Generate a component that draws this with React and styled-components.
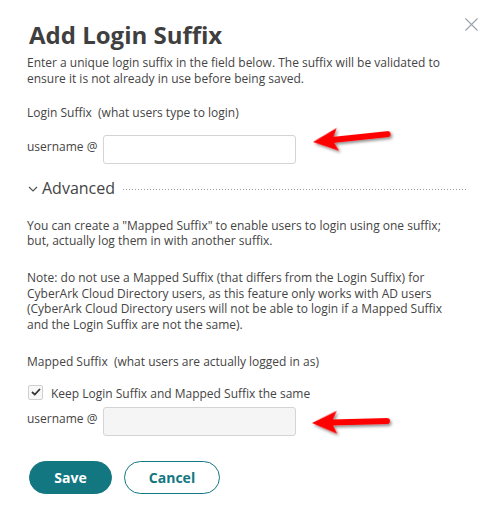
import React from "react";
import styled, { createGlobalStyle } from "styled-components";

const GlobalStyle = createGlobalStyle`
  body {
    margin: 0;
    background: #fff;
    font-family: "Open Sans", "Liberation Sans", sans-serif;
    color: #444;
  }
`;

const Dialog = styled.div`
  position: relative;
  width: 492px;
  height: 513px;
  box-sizing: border-box;
  padding: 0 25px 0 27px;
`;

const Header = styled.div`
  display: flex;
  justify-content: space-between;
  align-items: flex-start;
  margin-top: 19px;
`;

const Title = styled.h1`
  margin: 0 0 0 2px;
  font-size: 24px;
  line-height: 31px;
  font-weight: 700;
  color: #3f3f3f;
`;

const CloseButton = styled.button`
  border: 0;
  background: none;
  padding: 0;
  margin: -1px -12px 0 0;
  width: 14px;
  height: 14px;
  cursor: pointer;
  display: flex;
  svg {
    display: block;
  }
`;

const Text = styled.p`
  margin: ${(p) => p.$top || 0}px 0 0;
  max-width: 420px;
  font-size: 12px;
  line-height: 15.6px;
  color: #444;
`;

const FieldRow = styled.div`
  position: relative;
  display: flex;
  align-items: center;
  gap: 6px;
  margin-top: ${(p) => p.$top}px;
`;

const FieldLabel = styled.span`
  font-size: 12px;
  line-height: 15.6px;
  padding-bottom: 4px;
  white-space: nowrap;
`;

const Input = styled.input`
  box-sizing: border-box;
  width: 193px;
  height: 29px;
  border: 1px solid #d4d4d4;
  border-radius: 3px;
  background: ${(p) => (p.disabled ? "#f5f5f5" : "#fff")};
  padding: 0 8px;
  font: inherit;
  font-size: 12px;
  outline: none;
`;

const Arrow = styled.svg`
  position: absolute;
  left: ${(p) => p.$left}px;
  top: ${(p) => p.$top}px;
  overflow: visible;
`;

const SectionRow = styled.div`
  display: flex;
  align-items: center;
  margin-top: 12px;
  height: 24px;
`;

const Chevron = styled.svg`
  margin: 2px 4px 0 1px;
`;

const SectionTitle = styled.span`
  font-size: 16px;
  line-height: 24px;
  color: #444;
`;

const DottedRule = styled.div`
  flex: 1;
  height: 1px;
  margin: 3px 0 0 8px;
  background-image: linear-gradient(to right, #9a9a9a 1px, transparent 1px);
  background-size: 3px 1px;
`;

const CheckRow = styled.label`
  display: flex;
  align-items: flex-start;
  gap: 8px;
  margin-top: 16px;
  font-size: 12px;
  line-height: 15.6px;
`;

const CheckBox = styled.span`
  box-sizing: border-box;
  width: 15px;
  height: 15px;
  margin: -1px 0 0 1px;
  border: 1px solid #d0d0d0;
  border-radius: 2px;
  background: #f7f7f7;
  display: flex;
  align-items: center;
  justify-content: center;
`;

const Buttons = styled.div`
  display: flex;
  gap: 12px;
  margin: 25px 0 0 2px;
`;

const Button = styled.button`
  box-sizing: border-box;
  height: 33px;
  width: ${(p) => p.$width}px;
  border-radius: 17px;
  border: 1px solid #137781;
  background: ${(p) => (p.$primary ? "#137781" : "#fff")};
  color: ${(p) => (p.$primary ? "#fff" : "#137781")};
  font-family: "Open Sans", "Liberation Sans", sans-serif;
  font-size: 14px;
  font-weight: 700;
  cursor: pointer;
`;

const RedArrow = ({ left, top, angle }) => (
  <Arrow $left={left} $top={top} width="90" height="30" viewBox="0 0 90 30">
    <defs>
      <filter id={`sh${top}`} x="-20%" y="-50%" width="140%" height="200%">
        <feDropShadow dx="1.5" dy="2" stdDeviation="1.5" floodColor="#000" floodOpacity="0.45" />
      </filter>
    </defs>
    <g transform={`translate(8 15) rotate(${angle})`} filter={`url(#sh${top})`}>
      <path
        d="M0 0 L25 -11.5 L21 -3 L75 -3 A3 3 0 0 1 75 3 L21 3 L25 11.5 Z"
        fill="#ff0000"
      />
    </g>
  </Arrow>
);

export default function App() {
  return (
    <>
      <GlobalStyle />
      <Dialog>
        <Header>
          <Title>Add Login Suffix</Title>
          <CloseButton aria-label="Close">
            <svg width="13" height="13" viewBox="0 0 13 13">
              <path d="M0.5 0.5 L12.5 12.5 M12.5 0.5 L0.5 12.5" stroke="#9aa3ab" strokeWidth="1.1" />
            </svg>
          </CloseButton>
        </Header>

        <Text $top={5}>
          Enter a unique login suffix in the field below. The suffix will be validated to
          ensure it is not already in use before being saved.
        </Text>

        <Text $top={19}>Login Suffix&nbsp; (what users type to login)</Text>

        <FieldRow $top={14}>
          <FieldLabel>username @</FieldLabel>
          <Input type="text" />
          <RedArrow left={278} top={-8} angle={-6} />
        </FieldRow>

        <SectionRow>
          <Chevron width="10" height="6" viewBox="0 0 10 6">
            <polyline points="1,1 5,5 9,1" fill="none" stroke="#555" strokeWidth="1.2" />
          </Chevron>
          <SectionTitle>Advanced</SectionTitle>
          <DottedRule />
        </SectionRow>

        <Text $top={18}>
          You can create a "Mapped Suffix" to enable users to login using one suffix;
          but, actually log them in with another suffix.
        </Text>

        <Text $top={21}>
          Note: do not use a Mapped Suffix (that differs from the Login Suffix) for
          CyberArk Cloud Directory users, as this feature only works with AD users
          (CyberArk Cloud Directory users will not be able to login if a Mapped Suffix
          and the Login Suffix are not the same).
        </Text>

        <Text $top={22}>Mapped Suffix&nbsp; (what users are actually logged in as)</Text>

        <CheckRow>
          <CheckBox>
            <svg width="10" height="8" viewBox="0 0 10 8">
              <polyline points="1,4 3.8,6.6 9,1" fill="none" stroke="#333" strokeWidth="1.8" />
            </svg>
          </CheckBox>
          Keep Login Suffix and Mapped Suffix the same
        </CheckRow>

        <FieldRow $top={5}>
          <FieldLabel>username @</FieldLabel>
          <Input type="text" disabled />
          <RedArrow left={277} top={1} angle={-1.5} />
        </FieldRow>

        <Buttons>
          <Button $primary $width={83}>Save</Button>
          <Button $width={96}>Cancel</Button>
        </Buttons>
      </Dialog>
    </>
  );
}
